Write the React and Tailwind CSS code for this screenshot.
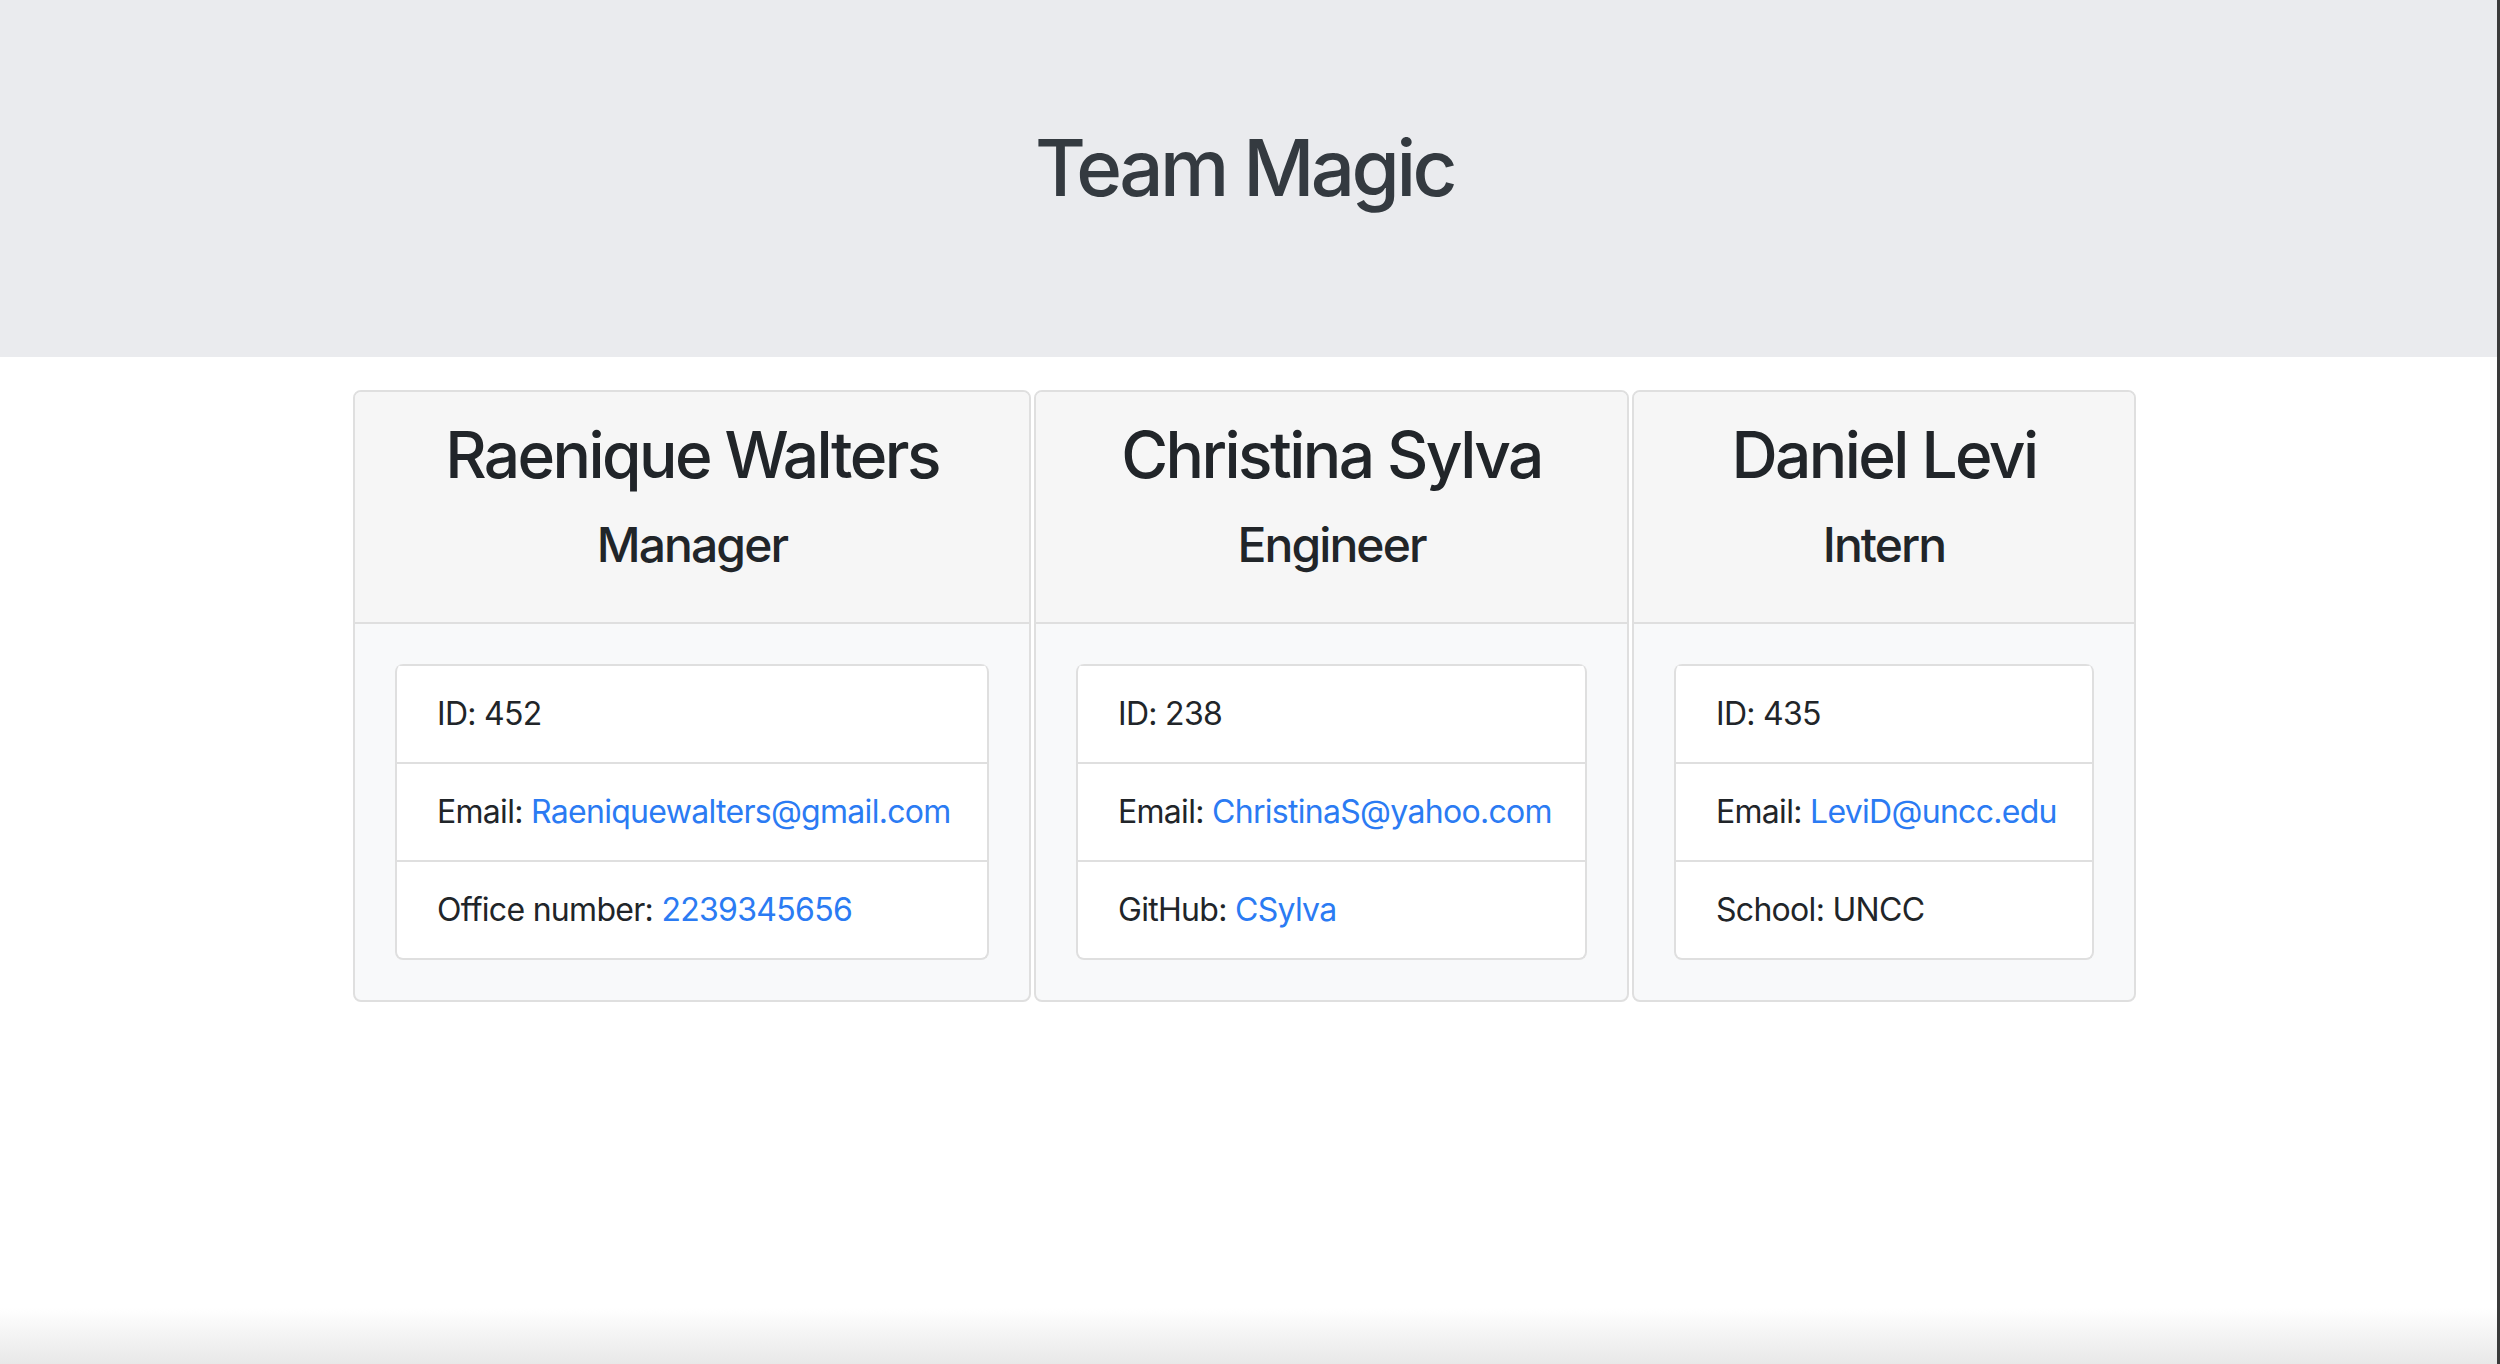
import React from "react";

const TEAM = [
  {
    name: "Raenique Walters",
    role: "Manager",
    width: "w-[678px]",
    rows: [
      { label: "ID:", value: "452" },
      { label: "Email:", value: "Raeniquewalters@gmail.com", href: "mailto:Raeniquewalters@gmail.com" },
      { label: "Office number:", value: "2239345656", href: "tel:2239345656" }
    ]
  },
  {
    name: "Christina Sylva",
    role: "Engineer",
    width: "w-[595px]",
    rows: [
      { label: "ID:", value: "238" },
      { label: "Email:", value: "ChristinaS@yahoo.com", href: "mailto:ChristinaS@yahoo.com" },
      { label: "GitHub:", value: "CSylva", href: "https://github.com/CSylva" }
    ]
  },
  {
    name: "Daniel Levi",
    role: "Intern",
    width: "w-[504px]",
    rows: [
      { label: "ID:", value: "435" },
      { label: "Email:", value: "LeviD@uncc.edu", href: "mailto:LeviD@uncc.edu" },
      { label: "School:", value: "UNCC" }
    ]
  }
];

export default function App() {
  return (
    <div className="flex min-h-screen bg-white font-['Inter','Noto_Sans',sans-serif]">
      <div className="flex flex-1 flex-col">
        {/* JUMBOTRON */}
        <header className="h-[357px] bg-[#eaebee] pt-[120px] pr-[8px] text-center">
          <h1 className="text-[78px] leading-[96px] font-medium tracking-[-0.045em] text-[#343a40]">Team Magic</h1>
        </header>

        {/* CARDS */}
        <main className="mt-[33px] flex justify-center gap-[3px] pr-[8px]">
          {TEAM.map((m) => (
            <EmployeeCard key={m.name} {...m} />
          ))}
        </main>

        <div className="flex-1" />
        <div className="h-[56px] bg-gradient-to-b from-white to-[#e8e8e8]" />
      </div>
      <div className="w-[3px] bg-[#3a3a3a]" />
    </div>
  );
}

function EmployeeCard({ name, role, width, rows }) {
  return (
    <div className={`${width} overflow-hidden rounded-[8px] border-2 border-[#dfdfdf] bg-[#f8f9fa]`}>
      <div className="border-b-2 border-[#dfdfdf] bg-[#f6f6f6] px-[20px] pt-[24px] pb-[48px] text-center text-[#212529]">
        <h2 className="mb-[23px] text-[64px] leading-[77px] font-medium tracking-[-0.04em] whitespace-nowrap">{name}</h2>
        <h4 className="text-[48px] leading-[58px] font-medium tracking-[-0.04em]">{role}</h4>
      </div>
      <div className="p-[40px]">
        <ul className="overflow-hidden rounded-[8px] border-2 border-t-0 border-[#dfdfdf] bg-white">
          {rows.map((r) => (
            <li
              key={r.label}
              className="border-t-2 border-[#dfdfdf] px-[40px] py-[24px] text-[32px] leading-[48px] tracking-[-0.022em] whitespace-nowrap text-[#212529]"
            >
              {r.label}{" "}
              {r.href ? (
                <a href={r.href} className="text-[#2b7bf3]">
                  {r.value}
                </a>
              ) : (
                r.value
              )}
            </li>
          ))}
        </ul>
      </div>
    </div>
  );
}
